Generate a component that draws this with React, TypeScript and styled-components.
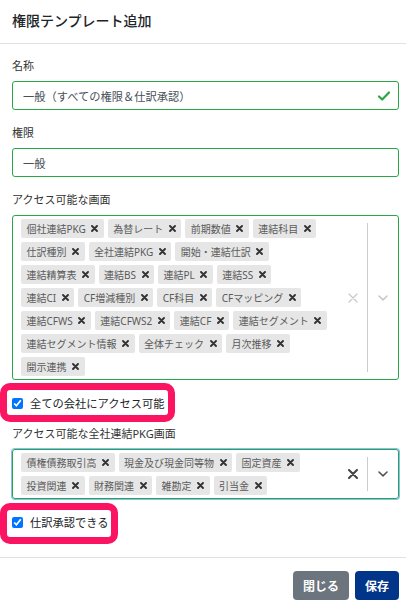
import React from "react";
import styled, { createGlobalStyle } from "styled-components";

const GlobalStyle = createGlobalStyle`
  *, *::before, *::after { box-sizing: border-box; }
  html, body { margin: 0; padding: 0; background: #fff; }
  body {
    font-family: "Noto Sans", "Noto Sans CJK JP", sans-serif;
    color: #212529;
  }
`;

const Modal = styled.div`
  width: 406px;
  height: 610px;
  display: flex;
  flex-direction: column;
  overflow: hidden;
  background: #fff;
`;

const Header = styled.header`
  height: 44px;
  border-bottom: 1px solid #dee2e6;
  padding: 12px 12px 0;
`;

const Title = styled.h1`
  margin: 0;
  font-size: 14px;
  line-height: 17px;
  font-weight: 500;
  color: #212529;
`;

const Body = styled.div`
  padding: 14px 7px 27px 12px;
`;

const Field = styled.div<{ $gap?: number }>`
  margin-top: ${(p) => p.$gap ?? 0}px;
`;

const Label = styled.div`
  font-size: 11px;
  line-height: 16px;
  color: #333;
  margin-bottom: 7px;
`;

const InputBox = styled.div`
  height: 29px;
  border: 1px solid #28a745;
  border-radius: 3px;
  display: flex;
  align-items: center;
  padding: 0 8px 0 10px;
  font-size: 11.25px;
  color: #495057;
`;

const InputText = styled.span`
  flex: 1;
`;

const Select = styled.div<{ $focused?: boolean }>`
  display: flex;
  border: 1px solid #28a745;
  border-radius: 3px;
  box-shadow: ${(p) => (p.$focused ? "0 0 0 1px rgba(38, 132, 255, 0.55)" : "none")};
`;

const ValueContainer = styled.div`
  flex: 1;
  display: flex;
  flex-wrap: wrap;
  align-content: flex-start;
  padding: 1px 9px 1px 6px;
`;

const Tag = styled.span`
  display: inline-flex;
  align-items: center;
  height: 19px;
  margin: 2px;
  padding-left: 5.5px;
  background: #e6e6e6;
  border-radius: 2px;
  font-size: 10px;
  color: #5a5a5a;
  white-space: nowrap;
`;

const TagRemove = styled.span`
  width: 18px;
  height: 100%;
  display: flex;
  align-items: center;
  justify-content: center;
`;

const Indicators = styled.div`
  display: flex;
  align-items: stretch;
`;

const Indicator = styled.div<{ $w: number }>`
  width: ${(p) => p.$w}px;
  display: flex;
  align-items: center;
  justify-content: center;
`;

const Separator = styled.span`
  width: 1px;
  background: #ccc;
  margin: 7px 0;
`;

const CheckRow = styled.label<{ $gap: number; $w: number; $top: number; $h: number }>`
  position: relative;
  display: flex;
  align-items: center;
  gap: 7px;
  height: 16px;
  width: fit-content;
  margin-top: ${(p) => p.$gap}px;
  font-size: 11.25px;
  color: #212529;

  &::before {
    content: "";
    position: absolute;
    left: -12px;
    top: ${(p) => p.$top}px;
    width: ${(p) => p.$w}px;
    height: ${(p) => p.$h}px;
    border: 7px solid #fb1462;
    border-radius: 10px;
    pointer-events: none;
  }
`;

const Checkbox = styled.input`
  width: 11px;
  height: 11px;
  margin: 0;
  accent-color: #0075ff;
`;

const Footer = styled.footer`
  border-top: 1px solid #dee2e6;
  padding: 13px 7px 10px 12px;
  display: flex;
  justify-content: flex-end;
  gap: 6px;
`;

const Button = styled.button<{ $variant: "secondary" | "primary" }>`
  height: 29px;
  padding: 0 10px;
  border: none;
  border-radius: 4px;
  font-family: inherit;
  font-size: 12px;
  font-weight: 700;
  color: #fff;
  background: ${(p) => (p.$variant === "primary" ? "#01358a" : "#6c757d")};
`;

const TagX = () => (
  <svg width="7" height="7" viewBox="0 0 7 7">
    <path d="M1 1L6 6M6 1L1 6" stroke="#333" strokeWidth="1.9" strokeLinecap="round" />
  </svg>
);

const ClearX = ({ dark }: { dark?: boolean }) => (
  <svg width="10" height="10" viewBox="0 0 10 10">
    <path
      d="M1 1L9 9M9 1L1 9"
      stroke={dark ? "#444" : "#c8c8c8"}
      strokeWidth={dark ? 2 : 1.2}
      strokeLinecap="round"
    />
  </svg>
);

const Chevron = ({ dark }: { dark?: boolean }) => (
  <svg width="10" height="6" viewBox="0 0 10 6">
    <path
      d="M1 1L5 4.8L9 1"
      fill="none"
      stroke={dark ? "#555" : "#c8c8c8"}
      strokeWidth="1.6"
      strokeLinecap="round"
      strokeLinejoin="round"
    />
  </svg>
);

const CheckMark = () => (
  <svg width="12" height="10" viewBox="0 0 12 10">
    <path
      d="M1 5.5L4.2 8.5L11 1.5"
      fill="none"
      stroke="#28a745"
      strokeWidth="2.2"
      strokeLinecap="round"
      strokeLinejoin="round"
    />
  </svg>
);

const screens = [
  "個社連結PKG", "為替レート", "前期数値", "連結科目",
  "仕訳種別", "全社連結PKG", "開始・連結仕訳",
  "連結精算表", "連結BS", "連結PL", "連結SS",
  "連結CI", "CF増減種別", "CF科目", "CFマッピング",
  "連結CFWS", "連結CFWS2", "連結CF", "連結セグメント",
  "連結セグメント情報", "全体チェック", "月次推移",
  "開示連携",
];

const pkgScreens = [
  "債権債務取引高", "現金及び現金同等物", "固定資産",
  "投資関連", "財務関連", "雑勘定", "引当金",
];

const MultiSelect = ({ items, focused }: { items: string[]; focused?: boolean }) => (
  <Select $focused={focused}>
    <ValueContainer>
      {items.map((t) => (
        <Tag key={t}>
          {t}
          <TagRemove>
            <TagX />
          </TagRemove>
        </Tag>
      ))}
    </ValueContainer>
    <Indicators>
      <Indicator $w={28}>
        <ClearX dark={focused} />
      </Indicator>
      <Separator />
      <Indicator $w={30}>
        <Chevron dark={focused} />
      </Indicator>
    </Indicators>
  </Select>
);

export default function App() {
  return (
    <>
      <GlobalStyle />
      <Modal>
        <Header>
          <Title>権限テンプレート追加</Title>
        </Header>
        <Body>
          <Field>
            <Label>名称</Label>
            <InputBox>
              <InputText>一般（すべての権限＆仕訳承認）</InputText>
              <CheckMark />
            </InputBox>
          </Field>
          <Field $gap={15}>
            <Label>権限</Label>
            <InputBox>
              <InputText>一般</InputText>
            </InputBox>
          </Field>
          <Field $gap={15}>
            <Label>アクセス可能な画面</Label>
            <MultiSelect items={screens} />
          </Field>
          <CheckRow $gap={15} $top={-12} $w={175} $h={39}>
            <Checkbox type="checkbox" defaultChecked />
            全ての会社にアクセス可能
          </CheckRow>
          <Field $gap={15}>
            <Label>アクセス可能な全社連結PKG画面</Label>
            <MultiSelect items={pkgScreens} focused />
          </Field>
          <CheckRow $gap={15} $top={-11} $w={118} $h={41}>
            <Checkbox type="checkbox" defaultChecked />
            仕訳承認できる
          </CheckRow>
        </Body>
        <Footer>
          <Button $variant="secondary">閉じる</Button>
          <Button $variant="primary">保存</Button>
        </Footer>
      </Modal>
    </>
  );
}
